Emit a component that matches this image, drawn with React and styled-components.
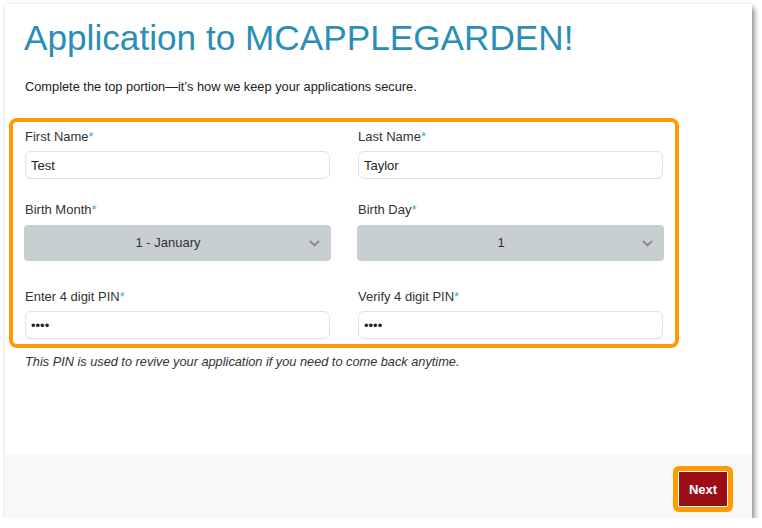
import styled, { createGlobalStyle } from "styled-components";

const GlobalStyle = createGlobalStyle`
  body {
    margin: 0;
    background: #ffffff;
    font-family: "Liberation Sans", Arial, sans-serif;
    color: #333;
  }
`;

const Page = styled.div`
  padding: 4px 0 0 5px;
`;

const Card = styled.div`
  width: 747px;
  height: 514px;
  background: #fff;
  display: flex;
  flex-direction: column;
  box-shadow: 3px 4px 5px rgba(0, 0, 0, 0.38), 0 0 3px rgba(0, 0, 0, 0.12);
`;

const Body = styled.div`
  flex: 1;
  padding: 14px 19px 0 19px;
`;

const Title = styled.h1`
  margin: 0;
  font-size: 35.2px;
  line-height: 40px;
  font-weight: 400;
  color: #2b8eb7;
`;

const Intro = styled.p`
  margin: 21px 0 23px 1px;
  font-size: 12.8px;
  line-height: 16px;
  color: #222;
`;

const Highlight = styled.div`
  margin-left: -15px;
  width: 640px;
  border: 4px solid #ff9a00;
  border-radius: 8px;
  padding: 7px 11px 5px 11px;
  display: grid;
  grid-template-columns: 307px 307px;
  column-gap: 26px;
`;

const Field = styled.div`
  display: flex;
  flex-direction: column;
  margin-bottom: ${(p) => p.$after || 0}px;
`;

const Label = styled.label`
  font-size: 13px;
  line-height: 16px;
  color: #333;
  margin: 0 0 ${(p) => p.$space || 6}px 1px;
`;

const Star = styled.span`
  color: #4aa6cc;
`;

const TextInput = styled.input`
  box-sizing: border-box;
  height: 28px;
  margin: 0 1px;
  border: 1px solid #e2e2e2;
  border-radius: 6px;
  padding: 0 5px;
  font-family: "Liberation Sans", Arial, sans-serif;
  font-size: 13px;
  color: #222;
  background: #fff;
  outline: none;
`;

const Select = styled.div`
  position: relative;
  height: 36px;
  border-radius: 4px;
  background: #c7cfd1;
  display: flex;
  align-items: center;
  justify-content: center;
  padding-right: 19px;
  font-size: 13px;
  line-height: 16px;
  color: #333;
`;

const Chevron = styled.svg`
  position: absolute;
  right: 11px;
  top: 15px;
`;

const Note = styled.p`
  margin: 6px 0 0 1px;
  font-size: 12.75px;
  line-height: 16px;
  font-style: italic;
  color: #333;
`;

const Footer = styled.div`
  height: 64px;
  background: #f8f8f8;
  display: flex;
  justify-content: flex-end;
  align-items: flex-start;
  padding: 12px 19px 0 0;
  box-sizing: border-box;
`;

const NextButton = styled.button`
  width: 60px;
  height: 46px;
  border: 5px solid #ff9a00;
  border-radius: 6px;
  background: #9b0e17;
  box-shadow: inset 0 0 0 1px #fff;
  color: #fff;
  font-family: "Liberation Sans", Arial, sans-serif;
  font-weight: 700;
  font-size: 13px;
  padding: 0;
  cursor: pointer;
`;

const Arrow = () => (
  <Chevron width="11" height="7" viewBox="0 0 11 7">
    <polyline points="1,1 5.5,5.5 10,1" fill="none" stroke="#888" strokeWidth="1.8" />
  </Chevron>
);

const Req = ({ children, space }) => (
  <Label $space={space}>
    {children}
    <Star>*</Star>
  </Label>
);

export default function App() {
  return (
    <Page>
      <GlobalStyle />
      <Card>
        <Body>
          <Title>Application to MCAPPLEGARDEN!</Title>
          <Intro>Complete the top portion—it’s how we keep your applications secure.</Intro>
          <Highlight>
            <Field $after={23}>
              <Req>First Name</Req>
              <TextInput readOnly value="Test" />
            </Field>
            <Field $after={23}>
              <Req>Last Name</Req>
              <TextInput readOnly value="Taylor" />
            </Field>
            <Field $after={28}>
              <Req space={7}>Birth Month</Req>
              <Select>
                1 - January
                <Arrow />
              </Select>
            </Field>
            <Field $after={28}>
              <Req space={7}>Birth Day</Req>
              <Select>
                1
                <Arrow />
              </Select>
            </Field>
            <Field>
              <Req>Enter 4 digit PIN</Req>
              <TextInput type="password" readOnly value="1234" />
            </Field>
            <Field>
              <Req>Verify 4 digit PIN</Req>
              <TextInput type="password" readOnly value="1234" />
            </Field>
          </Highlight>
          <Note>This PIN is used to revive your application if you need to come back anytime.</Note>
        </Body>
        <Footer>
          <NextButton>Next</NextButton>
        </Footer>
      </Card>
    </Page>
  );
}
